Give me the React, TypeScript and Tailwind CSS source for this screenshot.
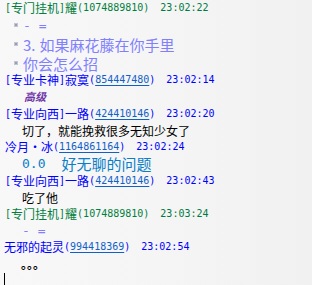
import React from "react";

const font = { fontFamily: '"Noto Sans CJK SC", sans-serif' };

function Row({ h, children, className = "" }: { h: string; children: React.ReactNode; className?: string }) {
  return <div className={`flex items-center whitespace-nowrap ${h} ${className}`}>{children}</div>;
}

function M({ children, className = "" }: { children: React.ReactNode; className?: string }) {
  return <span className={`font-['DejaVu_Sans_Mono'] text-[10px] ${className}`}>{children}</span>;
}

function Bullet({ children }: { children: React.ReactNode }) {
  return (
    <>
      <span className="ml-[14px] mr-[5px] inline-block h-[4px] w-[4px] border border-[#c4c4d4] bg-[#9c9cb4]" />
      <span className="flex items-center text-[15px] leading-none text-[#8080ff]">{children}</span>
    </>
  );
}

function Link({ children }: { children: React.ReactNode }) {
  return <M className="text-[#1060c8] underline underline-offset-2">{children}</M>;
}

function Time({ t, className = "ml-[11px]" }: { t: string; className?: string }) {
  return <M className={className}>{t}</M>;
}

export default function App() {
  return (
    <div
      className="h-[285px] w-[312px] overflow-hidden bg-gradient-to-r from-[#f8f8f8] via-[#f5f5f5] to-[#f1f1f1] text-[12px] leading-none"
      style={font}
    >
      <Row h="h-[16px]" className="pl-[5px] text-[#008040]">
        <M>[</M>
        <span>专门挂机</span>
        <M>]</M>
        <span>耀</span>
        <M>(1074889810)</M>
        <Time t="23:02:22" className="ml-[11px] text-[#007a40]" />
      </Row>
      <Row h="h-[18px]">
        <Bullet>
          <span className="font-['DejaVu_Sans_Mono'] text-[13px]">- =</span>
        </Bullet>
      </Row>
      <Row h="h-[20px]">
        <Bullet>
          <span className="mr-[4px]">3.</span>
          <span>如果麻花藤在你手里</span>
        </Bullet>
      </Row>
      <Row h="h-[18px]">
        <Bullet>你会怎么招</Bullet>
      </Row>
      <Row h="h-[16px]" className="pl-[5px] text-[#0000ff]">
        <M>[</M>
        <span>专业卡神</span>
        <M>]</M>
        <span>寂寞</span>
        <M>(</M>
        <Link>854447480</Link>
        <M>)</M>
        <Time t="23:02:14" />
      </Row>
      <Row h="h-[17px]" className="pl-[24px]">
        <span className="text-[11px] font-bold italic text-[#7038a8]">高级</span>
      </Row>
      <Row h="h-[17px]" className="pl-[5px] text-[#0000ff]">
        <M>[</M>
        <span>专业向西</span>
        <M>]</M>
        <span>一路</span>
        <M>(</M>
        <Link>424410146</Link>
        <M>)</M>
        <Time t="23:02:20" />
      </Row>
      <Row h="h-[17px]" className="pl-[22px] text-black">
        <span>切了，就能挽救很多无知少女了</span>
      </Row>
      <Row h="h-[16px]" className="pl-[5px] text-[#0000ff]">
        <span>冷月・冰</span>
        <M>(</M>
        <Link>1164861164</Link>
        <M>)</M>
        <Time t="23:02:24" />
      </Row>
      <Row h="h-[17px]" className="pl-[22px] text-[15px] text-[#0a7ec8]">
        <span className="font-['DejaVu_Sans_Mono'] text-[13px]">0.0</span>
        <span className="ml-[16px]">好无聊的问题</span>
      </Row>
      <Row h="h-[17px]" className="pl-[5px] text-[#0000ff]">
        <M>[</M>
        <span>专业向西</span>
        <M>]</M>
        <span>一路</span>
        <M>(</M>
        <Link>424410146</Link>
        <M>)</M>
        <Time t="23:02:43" />
      </Row>
      <Row h="h-[17px]" className="pl-[22px] text-black">
        <span>吃了他</span>
      </Row>
      <Row h="h-[16px]" className="pl-[5px] text-[#008040]">
        <M>[</M>
        <span>专门挂机</span>
        <M>]</M>
        <span>耀</span>
        <M>(1074889810)</M>
        <Time t="23:03:24" className="ml-[11px] text-[#007a40]" />
      </Row>
      <Row h="h-[16px]" className="pl-[22px] text-[#8080ff]">
        <span className="font-['DejaVu_Sans_Mono'] text-[13px]">- =</span>
      </Row>
      <Row h="h-[17px]" className="pl-[4px] text-[#0000ff]">
        <span>无邪的起灵</span>
        <M>(</M>
        <Link>994418369</Link>
        <M>)</M>
        <Time t="23:02:54" />
      </Row>
      <Row h="h-[18px]" className="pl-[21px] text-black">
        <span className="font-bold">。。。</span>
      </Row>
      <div className="ml-[4px] h-[13px] w-[1px] bg-black" />
    </div>
  );
}
